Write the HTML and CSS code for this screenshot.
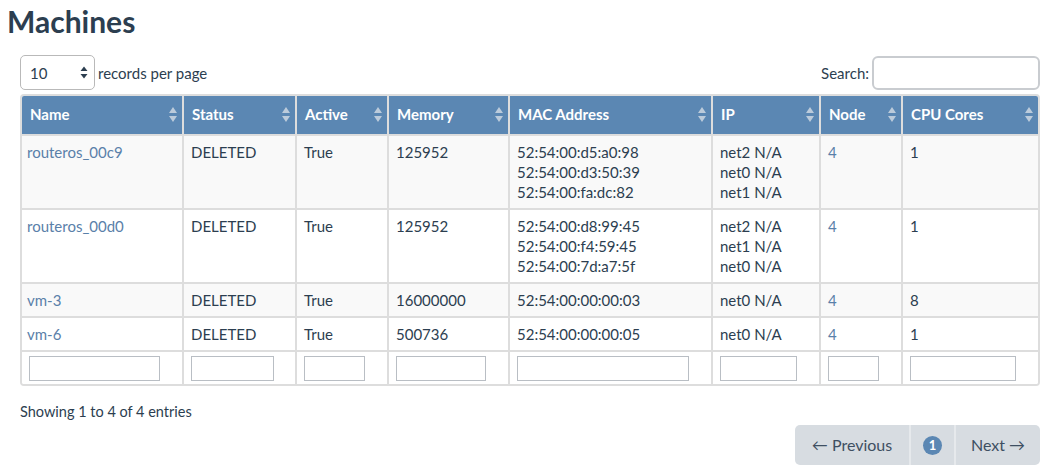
FILE: index.html
```html
<!DOCTYPE html>
<html>
<head>
<meta charset="utf-8">
<title>Machines</title>
<link rel="stylesheet" href="styles.css">
</head>
<body>
<div class="page">
  <h1 class="title">Machines</h1>
  <div class="dt">
    <div class="controls">
      <div class="length">
        <div class="select"><span>10</span>
          <svg class="sel-arrows" width="8" height="13" viewBox="0 0 8 13"><path d="M4 0.5L7.5 5H0.5Z M4 12.5L7.5 8H0.5Z" fill="#2c3e50"/></svg>
        </div>
        <span class="length-label">records per page</span>
      </div>
      <div class="search"><span>Search:</span><div class="search-input"></div></div>
    </div>
    <div class="table-wrap">
      <table class="grid">
        <thead>
          <tr>
            <th class="c-name">Name<i class="sort"></i></th>
            <th class="c-status">Status<i class="sort"></i></th>
            <th class="c-active">Active<i class="sort"></i></th>
            <th class="c-mem">Memory<i class="sort"></i></th>
            <th class="c-mac">MAC Address<i class="sort"></i></th>
            <th class="c-ip">IP<i class="sort"></i></th>
            <th class="c-node">Node<i class="sort"></i></th>
            <th class="c-cpu">CPU Cores<i class="sort"></i></th>
          </tr>
        </thead>
        <tbody>
          <tr class="odd">
            <td><a href="#">routeros_00c9</a></td>
            <td>DELETED</td>
            <td>True</td>
            <td>125952</td>
            <td>52:54:00:d5:a0:98<br>52:54:00:d3:50:39<br>52:54:00:fa:dc:82</td>
            <td>net2 N/A<br>net0 N/A<br>net1 N/A</td>
            <td><a href="#">4</a></td>
            <td>1</td>
          </tr>
          <tr>
            <td><a href="#">routeros_00d0</a></td>
            <td>DELETED</td>
            <td>True</td>
            <td>125952</td>
            <td>52:54:00:d8:99:45<br>52:54:00:f4:59:45<br>52:54:00:7d:a7:5f</td>
            <td>net2 N/A<br>net1 N/A<br>net0 N/A</td>
            <td><a href="#">4</a></td>
            <td>1</td>
          </tr>
          <tr class="odd">
            <td><a href="#">vm-3</a></td>
            <td>DELETED</td>
            <td>True</td>
            <td>16000000</td>
            <td>52:54:00:00:00:03</td>
            <td>net0 N/A</td>
            <td><a href="#">4</a></td>
            <td>8</td>
          </tr>
          <tr>
            <td><a href="#">vm-6</a></td>
            <td>DELETED</td>
            <td>True</td>
            <td>500736</td>
            <td>52:54:00:00:00:05</td>
            <td>net0 N/A</td>
            <td><a href="#">4</a></td>
            <td>1</td>
          </tr>
        </tbody>
        <tfoot>
          <tr class="filters">
            <td><input class="f f-name" type="text"></td>
            <td><input class="f f-status" type="text"></td>
            <td><input class="f f-active" type="text"></td>
            <td><input class="f f-mem" type="text"></td>
            <td><input class="f f-mac" type="text"></td>
            <td><input class="f f-ip" type="text"></td>
            <td><input class="f f-node" type="text"></td>
            <td><input class="f f-cpu" type="text"></td>
          </tr>
        </tfoot>
      </table>
    </div>
    <div class="info">Showing 1 to 4 of 4 entries</div>
    <div class="pager-row">
      <ul class="pager">
        <li class="prev">&larr; Previous</li>
        <li class="num"><span class="badge">1</span></li>
        <li class="next">Next &rarr;</li>
      </ul>
    </div>
  </div>
</div>
</body>
</html>
```

FILE: styles.css
```css
* { box-sizing: border-box; }
html, body { margin: 0; padding: 0; background: #fff; }
body {
  font-family: Lato, "Open Sans", "Liberation Sans", sans-serif;
  font-size: 15px;
  line-height: 20px;
  color: #2c3e50;
}
.page { padding: 3px 17px 0 7px; }
.title {
  margin: 0;
  font-size: 30px;
  line-height: 36px;
  font-weight: 700;
  color: #2c3e50;
}
.dt { margin: 16px 0 0 13px; }
.controls {
  display: flex;
  justify-content: space-between;
  align-items: center;
  height: 35px;
}
.length { display: flex; align-items: center; gap: 3px; }
.select {
  width: 75px;
  height: 35px;
  border: 1px solid #b9b9b9;
  border-radius: 5px;
  display: flex;
  align-items: center;
  justify-content: space-between;
  padding: 0 6px 0 9px;
}
.search { display: flex; align-items: center; gap: 3px; }
.search-input {
  width: 168px;
  height: 34px;
  border: 2px solid #c9ccd0;
  border-radius: 6px;
}
.table-wrap {
  margin-top: 4px;
  border: 2px solid #dddddd;
  border-radius: 4px;
  overflow: hidden;
}
.grid {
  width: 100%;
  border-collapse: separate;
  border-spacing: 0;
  table-layout: fixed;
}
.grid th, .grid td {
  border-left: 2px solid #dddddd;
  border-top: 2px solid #dddddd;
  text-align: left;
  vertical-align: top;
}
.grid th:first-child, .grid td:first-child { border-left: 0; }
.grid thead th { border-top: 0; }
.grid th {
  background: #5b87b3;
  color: #fff;
  font-weight: 700;
  height: 38px;
  padding: 8px 8px 10px;
  position: relative;
  vertical-align: middle;
}
.c-name { width: 160px; }
.c-status { width: 113px; }
.c-active { width: 92px; }
.c-mem { width: 121px; }
.c-mac { width: 203px; }
.c-ip { width: 108px; }
.c-node { width: 82px; }
.c-cpu { width: 137px; }
.sort {
  position: absolute;
  right: 5px;
  top: 11px;
  width: 8px;
  height: 15px;
}
.sort::before, .sort::after {
  content: "";
  position: absolute;
  left: 0;
  border-left: 4px solid transparent;
  border-right: 4px solid transparent;
}
.sort::before { top: 0; border-bottom: 6px solid #bccbdb; }
.sort::after { bottom: 0; border-top: 6px solid #bccbdb; }
.grid td { padding: 6px 7px 6px 7px; }
.grid td:first-child { padding-left: 5px; }
.grid tbody tr.odd td { background: #f9f9f9; }
.grid a { color: #5a80a9; text-decoration: none; }
.filters td { padding: 4px 7px 3px 7px; background: #fff; }
.filters td:first-child { padding-left: 7px; }
.f {
  display: block;
  height: 25px;
  border: 1px solid #b9bec4;
  border-radius: 0;
  padding: 0;
  margin: 0;
  background: #fff;
}
.f-name { width: 131px; }
.f-status { width: 83px; }
.f-active { width: 61px; }
.f-mem { width: 90px; }
.f-mac { width: 172px; }
.f-ip { width: 77px; }
.f-node { width: 51px; }
.f-cpu { width: 106px; }
.info { margin-top: 16px; font-size: 14.5px; }
.pager-row { display: flex; justify-content: flex-end; margin-top: 3px; }
.pager {
  list-style: none;
  margin: 0;
  padding: 0;
  display: flex;
  height: 40px;
  background: #d7dce1;
  border-radius: 5px;
  overflow: hidden;
  font-size: 16px;
}
.pager li {
  display: flex;
  align-items: center;
  justify-content: center;
  color: #3e4f62;
}
.pager .prev { width: 116px; border-right: 2px solid #e6e9ec; }
.pager .num { width: 45px; border-right: 2px solid #e6e9ec; }
.pager .next { width: 84px; }
.badge {
  width: 19px;
  height: 19px;
  border-radius: 50%;
  background: #5b87b3;
  color: #fff;
  font-weight: 700;
  font-size: 13px;
  line-height: 19px;
  text-align: center;
}
```
